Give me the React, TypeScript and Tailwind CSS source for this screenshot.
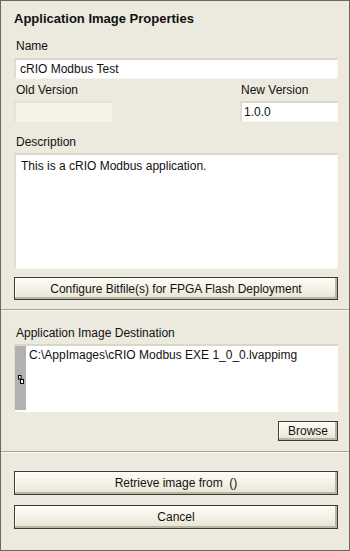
import React from "react";

const font = { fontFamily: '"Liberation Sans", Arial, sans-serif' };

function Btn({ children, className = "" }: { children: React.ReactNode; className?: string }) {
  return (
    <div
      className={`flex items-center justify-center border border-[#3c392d] bg-gradient-to-b from-[#fdfcf5] via-[#f4f2e6] to-[#e6e3d3] text-[12px] text-[#111] shadow-[inset_-2px_-2px_0_#b9b6a6,inset_1px_1px_0_#ffffff] ${className}`}
    >
      {children}
    </div>
  );
}

function Field({ children, className = "" }: { children?: React.ReactNode; className?: string }) {
  return (
    <div
      className={`border-t-2 border-l-2 border-t-[#d9d6ca] border-l-[#e0ddd2] border-r border-b border-r-[#f6f5ee] border-b-[#f6f5ee] bg-white text-[12px] text-[#111] ${className}`}
    >
      {children}
    </div>
  );
}

export default function App() {
  return (
    <div style={font} className="w-[350px] h-[551px] border border-[#6e6856] bg-[#ece9de] flex flex-col text-[#111] overflow-hidden">
      <div className="pl-[13px] pr-[11px] flex flex-col">
        <div className="mt-[10px] h-[16px] leading-[16px] text-[13px] font-bold">Application Image Properties</div>
        <div className="mt-[12px] h-[14px] leading-[14px] text-[12px] pl-[2px]">Name</div>
        <Field className="mt-[5px] h-[21px] leading-[18px] pl-[4px]">cRIO Modbus Test</Field>
        <div className="mt-[4px] flex justify-between h-[14px] leading-[14px] text-[12px]">
          <span className="pl-[2px]">Old Version</span>
          <span className="w-[98px] pl-[1px]">New Version</span>
        </div>
        <div className="mt-[4px] flex justify-between">
          <div className="w-[98px] h-[21px] border-t-2 border-l-2 border-[#e4e1d6] bg-[#f3f1e8]" />
          <Field className="w-[98px] h-[21px] leading-[18px] pl-[2px]">1.0.0</Field>
        </div>
        <div className="mt-[13px] h-[14px] leading-[14px] text-[12px] pl-[2px]">Description</div>
        <Field className="mt-[4px] h-[116px] pl-[5px] pt-[4px] leading-[14px]">This is a cRIO Modbus application.</Field>
        <Btn className="mt-[8px] h-[23px]">Configure Bitfile(s) for FPGA Flash Deployment</Btn>
      </div>
      <div className="mt-[9px] h-[2px] border-t border-t-[#a9a595] border-b border-b-[#f8f7f0]" />
      <div className="pl-[13px] pr-[11px] flex flex-col">
        <div className="mt-[15px] h-[14px] leading-[14px] text-[12px] pl-[2px]">Application Image Destination</div>
        <div className="mt-[4px] h-[68px] flex border-t-2 border-l border-t-[#d9d6ca] border-l-[#e0ddd2] bg-white">
          <div className="w-[11px] bg-[#b1b1b1] flex items-center justify-center mb-[2px]">
            <svg width="6" height="9" viewBox="0 0 6 9" className="mt-[2px]">
              <rect x="0.5" y="0.5" width="2.5" height="3.5" fill="#fff" stroke="#000" strokeWidth="1" />
              <rect x="2.5" y="4.5" width="3" height="4" fill="#fff" stroke="#000" strokeWidth="1" />
            </svg>
          </div>
          <div className="pl-[3px] pt-[2px] text-[12px] leading-[14px]">C:\AppImages\cRIO Modbus EXE 1_0_0.lvappimg</div>
        </div>
        <div className="mt-[9px] flex justify-end">
          <Btn className="w-[60px] h-[20px]">Browse</Btn>
        </div>
      </div>
      <div className="mt-[10px] h-[2px] border-t border-t-[#a9a595] border-b border-b-[#f8f7f0]" />
      <div className="pl-[13px] pr-[11px] flex flex-col">
        <Btn className="mt-[18px] h-[24px]">Retrieve image from&nbsp; ()</Btn>
        <Btn className="mt-[10px] h-[24px]">Cancel</Btn>
      </div>
    </div>
  );
}
